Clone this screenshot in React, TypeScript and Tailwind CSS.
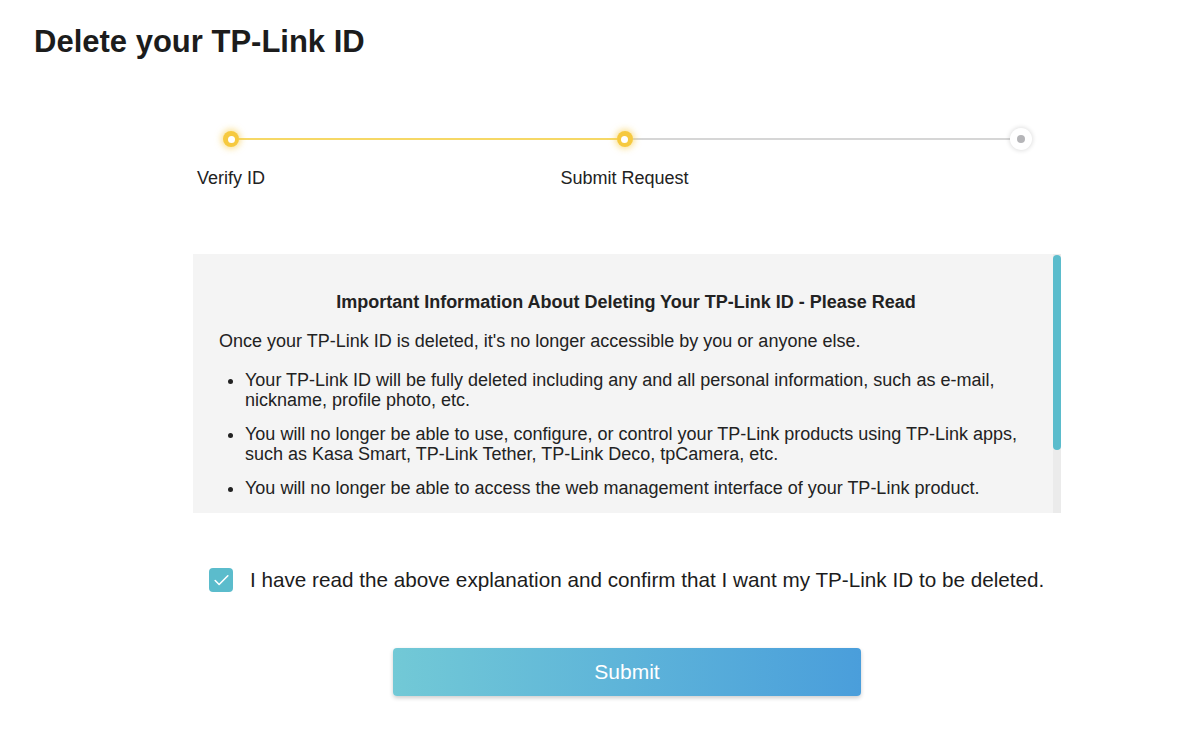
import { Check } from "lucide-react"

const bullets = [
  "Your TP-Link ID will be fully deleted including any and all personal information, such as e-mail, nickname, profile photo, etc.",
  "You will no longer be able to use, configure, or control your TP-Link products using TP-Link apps, such as Kasa Smart, TP-Link Tether, TP-Link Deco, tpCamera, etc.",
  "You will no longer be able to access the web management interface of your TP-Link product.",
]

function Dot({ active }: { active: boolean }) {
  if (active) {
    return (
      <span className="relative z-10 flex h-[16px] w-[16px] items-center justify-center rounded-full bg-[#f6c93f] shadow-[0_0_6px_2px_rgba(246,201,63,0.55)]">
        <span className="h-[7px] w-[7px] rounded-full bg-white" />
      </span>
    )
  }
  return (
    <span className="relative z-10 flex h-[22px] w-[22px] items-center justify-center rounded-full bg-white shadow-[0_0_4px_1px_rgba(0,0,0,0.12)]">
      <span className="h-[8px] w-[8px] rounded-full bg-[#b5b5b8]" />
    </span>
  )
}

function StepLabel({ width, text }: { width: string; text?: string }) {
  return (
    <div className={`flex justify-center ${width}`}>
      <span className="whitespace-nowrap">{text}</span>
    </div>
  )
}

function Stepper() {
  return (
    <div className="pl-[30px] pr-[29px]">
      <div className="flex h-[22px] items-center">
        <Dot active />
        <div className="h-[2px] flex-1 bg-[#f6d866]" />
        <Dot active />
        <div className="h-[2px] flex-1 bg-[#d6d6d6]" />
        <Dot active={false} />
      </div>
      <div className="mt-[17px] flex justify-between text-[18px] leading-[22px] text-[#222]">
        <StepLabel width="w-[16px]" text="Verify ID" />
        <StepLabel width="w-[16px]" text="Submit Request" />
        <StepLabel width="w-[22px]" />
      </div>
    </div>
  )
}

export default function App() {
  return (
    <div className="min-h-[752px] bg-white font-['Liberation_Sans',Arial,sans-serif] text-[#222]">
      <h1 className="pl-[34px] pt-[24px] text-[31px] font-bold leading-[36px] text-[#1c1c1c]">
        Delete your TP-Link ID
      </h1>

      <div className="ml-[193px] w-[868px]">
        <div className="mt-[68px]">
          <Stepper />
        </div>

        {/* Info box with scroll */}
        <div className="mt-[65px] flex h-[259px] bg-[#f4f4f4]">
          <div className="flex-1 overflow-hidden pl-[26px] pr-[20px] pt-[37px]">
            <p className="text-center text-[18px] font-bold leading-[22px]">
              Important Information About Deleting Your TP-Link ID - Please Read
            </p>
            <p className="mt-[17px] text-[18px] leading-[22px]">
              Once your TP-Link ID is deleted, it's no longer accessible by you or anyone else.
            </p>
            <ul className="mt-[18px] flex list-disc flex-col gap-[14px] pl-[26px] text-[18px] leading-[20px]">
              {bullets.map((b) => (
                <li key={b}>{b}</li>
              ))}
            </ul>
          </div>
          <div className="flex w-[8px] flex-col bg-[#ebebeb]">
            <div className="mt-[1px] h-[195px] rounded-full bg-[#5bbccc]" />
          </div>
        </div>

        <label className="ml-[16px] mt-[55px] flex items-center gap-[17px]">
          <span className="flex h-[24px] w-[24px] items-center justify-center rounded-[4px] bg-[#5bbccc]">
            <Check className="h-[19px] w-[19px] text-white" strokeWidth={2} />
          </span>
          <span className="text-[20.7px] leading-[24px] text-[#1c1c1c]">
            I have read the above explanation and confirm that I want my TP-Link ID to be deleted.
          </span>
        </label>

        <div className="mt-[56px] flex justify-center">
          <button className="h-[48px] w-[468px] rounded-[4px] bg-gradient-to-r from-[#72c9d6] to-[#4a9edb] text-[21px] text-white shadow-[0_2px_4px_rgba(0,0,0,0.2)]">
            Submit
          </button>
        </div>
      </div>
    </div>
  )
}
